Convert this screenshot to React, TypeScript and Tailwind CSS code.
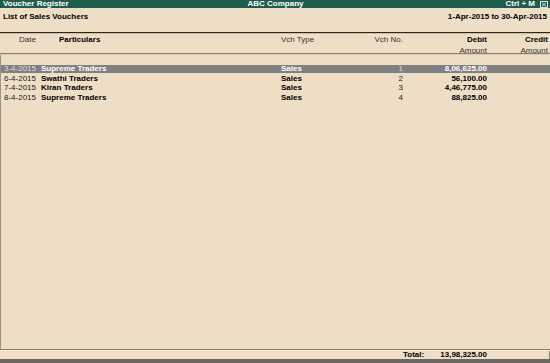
export default function App() {
  const rows = [
    { date: "3-4-2015", name: "Supreme Traders", type: "Sales", no: "1", debit: "8,06,625.00" },
    { date: "6-4-2015", name: "Swathi Traders", type: "Sales", no: "2", debit: "56,100.00" },
    { date: "7-4-2015", name: "Kiran Traders", type: "Sales", no: "3", debit: "4,46,775.00" },
    { date: "8-4-2015", name: "Supreme Traders", type: "Sales", no: "4", debit: "88,825.00" },
  ];

  return (
    <div className="w-[550px] h-[363px] flex flex-col bg-[#efdec6] text-[8px] leading-none text-black font-['Liberation_Sans',Arial,sans-serif] overflow-hidden">
      {/* Title bar */}
      <div className="h-[8px] bg-[#1e5c4b] text-white font-bold flex items-center pl-[3px] pr-[2px]">
        <div className="flex-1">Voucher Register</div>
        <div className="flex-1 text-center">ABC Company</div>
        <div className="flex-1 flex justify-end items-center gap-[5px]">
          <span>Ctrl + M</span>
          <svg width="8" height="7" viewBox="0 0 8 7" className="block">
            <rect x="0.5" y="0.5" width="7" height="6" fill="#1e5c4b" stroke="#e0e0e0" strokeWidth="1" />
            <path d="M2 1.8 L6 5.2 M6 1.8 L2 5.2" stroke="#e0e0e0" strokeWidth="1" />
          </svg>
        </div>
      </div>

      {/* Report heading */}
      <div className="h-[24px] flex justify-between px-[3px] pt-[5px] font-bold">
        <div>List of Sales Vouchers</div>
        <div>1-Apr-2015 to 30-Apr-2015</div>
      </div>

      <div className="h-[1px] bg-[#2a2620]" />
      <div className="h-[1px] bg-[#cbbca4]" />

      {/* Column headers */}
      <div className="h-[19px] flex flex-col pt-[2px]">
        <div className="flex h-[11px]">
          <div className="w-[36px] text-right text-[#333]">Date</div>
          <div className="w-[245px] pl-[23px] font-bold">Particulars</div>
          <div className="w-[79px] text-[#333]">Vch Type</div>
          <div className="w-[43px] text-right text-[#333]">Vch No.</div>
          <div className="w-[84px] text-right font-bold">Debit</div>
          <div className="w-[61px] text-right font-bold">Credit</div>
        </div>
        <div className="flex h-[6px]">
          <div className="w-[403px]" />
          <div className="w-[84px] text-right text-[#333]">Amount</div>
          <div className="w-[61px] text-right text-[#333]">Amount</div>
        </div>
      </div>

      <div className="h-[1px] bg-[#8c8274]" />
      <div className="h-[1px] bg-[#d9cab2]" />

      {/* Body */}
      <div className="flex-1 border-l border-[#9a948c] pt-[10px] flex flex-col gap-[1.5px]">
        {rows.map((r, i) => {
          const sel = i === 0;
          return (
            <div
              key={i}
              className={`flex h-[8px] items-center ${sel ? "bg-[#808080] text-white" : ""}`}
            >
              <div className={`w-[35px] text-right ${sel ? "text-[#dcdcdc]" : "text-[#222]"}`}>{r.date}</div>
              <div className="w-[245px] pl-[5px] font-bold">{r.name}</div>
              <div className="w-[79px] font-bold">{r.type}</div>
              <div className={`w-[43px] text-right ${sel ? "text-[#dcdcdc]" : "text-[#222]"}`}>{r.no}</div>
              <div className="w-[84px] text-right font-bold">{r.debit}</div>
              <div className="w-[61px]" />
            </div>
          );
        })}
      </div>

      {/* Total */}
      <div className="h-[1px] bg-[#8c8274]" />
      <div className="h-[1px] bg-[#f7eddd]" />
      <div className="h-[8px] flex items-center font-bold border-r border-[#8c8274]">
        <div className="w-[403px]" />
        <div className="w-[84px] flex justify-between">
          <span>Total:</span>
          <span>13,98,325.00</span>
        </div>
      </div>
      <div className="h-[4px] bg-[#6b6762]" />
    </div>
  );
}
